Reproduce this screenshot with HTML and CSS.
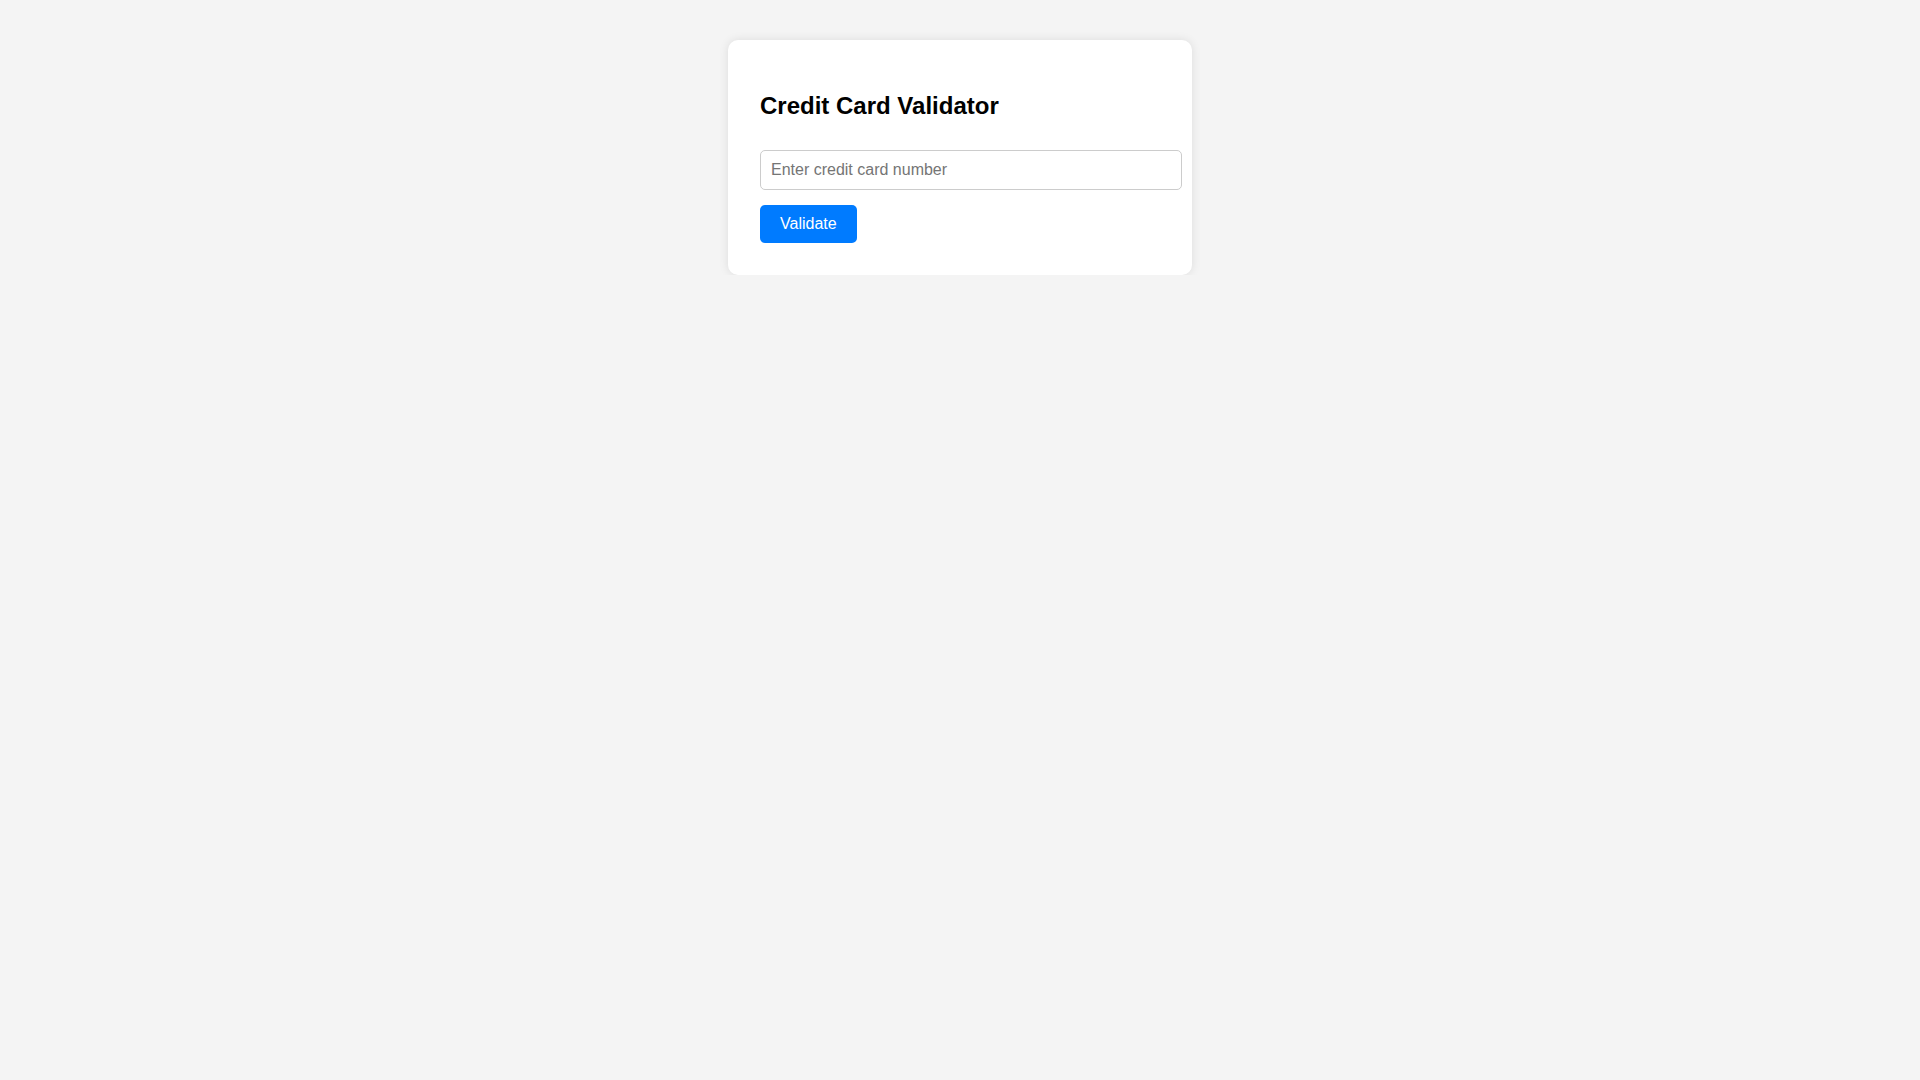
FILE: index.html
```html
<!DOCTYPE html>
<html lang="en">
<head>
<meta charset="utf-8">
<title>Credit Card Validator</title>
<link rel="stylesheet" href="styles.css">
</head>
<body>
<div class="container">
  <h2 class="title">Credit Card Validator</h2>
  <input class="card-input" type="text" placeholder="Enter credit card number">
  <button class="validate-btn" type="button">Validate</button>
  <div class="result"></div>
</div>
</body>
</html>
```

FILE: styles.css
```css
html, body {
  margin: 0;
  padding: 0;
}
body {
  background: #f4f4f4;
  font-family: "Liberation Sans", Arial, sans-serif;
  padding-top: 40px;
}
.container {
  width: 400px;
  margin: 0 auto;
  padding: 32px;
  background: #fff;
  border-radius: 10px;
  box-shadow: 0 0 10px rgba(0, 0, 0, 0.1);
}
.title {
  font-size: 24px;
  font-weight: bold;
  color: #000;
  margin: 20px 0 0;
  line-height: 27.6px;
}
.card-input {
  display: block;
  width: 100%;
  margin: 30px 0 15px;
  padding: 10px;
  font-family: "Liberation Sans", Arial, sans-serif;
  font-size: 16px;
  line-height: 18px;
  border: 1px solid #ccc;
  border-radius: 5px;
  color: #000;
}
.card-input::placeholder {
  color: #757575;
}
.validate-btn {
  display: block;
  padding: 10px 20px;
  font-family: "Liberation Sans", Arial, sans-serif;
  font-size: 16px;
  line-height: 18px;
  background: #007bff;
  color: #fff;
  border: none;
  border-radius: 5px;
  cursor: pointer;
}
.result:empty {
  display: none;
}
```
